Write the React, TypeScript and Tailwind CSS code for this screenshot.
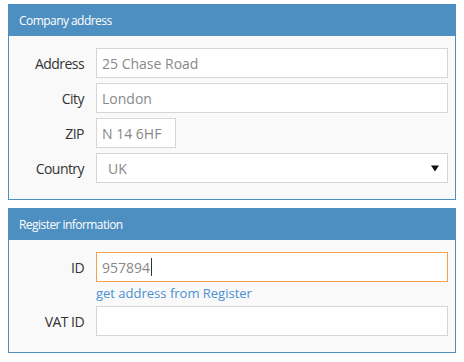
import React from "react";

const font = { fontFamily: '"Open Sans", "Noto Sans", sans-serif' };

function Row({ label, children }: { label: string; children: React.ReactNode }) {
  return (
    <>
      <div className="flex h-[30px] items-center justify-end text-[14px] tracking-[-0.55px] text-[#333]">{label}</div>
      <div>{children}</div>
    </>
  );
}

function Field({ value, w, focused }: { value?: string; w?: string; focused?: boolean }) {
  return (
    <div
      className={`flex h-[30px] items-center border bg-white pl-[5px] text-[14px] text-[#888] ${
        focused ? "border-[#f4a04c]" : "border-[#d6d6d6]"
      } ${w ?? "w-full"}`}
    >
      <span>{value}</span>
      {focused && <span className="ml-[1px] inline-block h-[18px] w-px bg-[#333]" />}
    </div>
  );
}

function Panel({ title, children }: { title: string; children: React.ReactNode }) {
  return (
    <div className="w-[448px] border border-[#4e8fc1] bg-[#f9f9f9]">
      <div className="flex h-[31px] items-center bg-[#4e8fc1] pl-[10px] text-[12px] font-medium tracking-[-0.55px] text-white">{title}</div>
      {children}
    </div>
  );
}

export default function App() {
  return (
    <div className="flex flex-col gap-2 bg-white pl-[8px] pt-[4px]" style={font}>
      <Panel title="Company address">
        <div className="grid grid-cols-[75px_1fr] gap-x-3 gap-y-[5px] pb-[16px] pr-[7px] pt-[12px]">
          <Row label="Address">
            <Field value="25 Chase Road" />
          </Row>
          <Row label="City">
            <Field value="London" />
          </Row>
          <Row label="ZIP">
            <Field value="N 14 6HF" w="w-[80px]" />
          </Row>
          <Row label="Country">
            <div className="flex h-[30px] items-center justify-between border border-[#d6d6d6] bg-white pl-[11px] pr-[8px] text-[14px] text-[#888]">
              <span>UK</span>
              <svg width="8" height="8" viewBox="0 0 8 8">
                <path d="M0 1.5h8L4 7.5z" fill="#111" />
              </svg>
            </div>
          </Row>
        </div>
      </Panel>
      <Panel title="Register information">
        <div className="grid grid-cols-[75px_1fr] gap-x-3 pb-[16px] pr-[7px] pt-[12px]">
          <Row label="ID">
            <Field value="957894" focused />
          </Row>
          <div />
          <div className="flex h-[24px] items-center text-[13px] text-[#4a90d2]">get address from Register</div>
          <Row label="VAT ID">
            <Field />
          </Row>
        </div>
      </Panel>
    </div>
  );
}
